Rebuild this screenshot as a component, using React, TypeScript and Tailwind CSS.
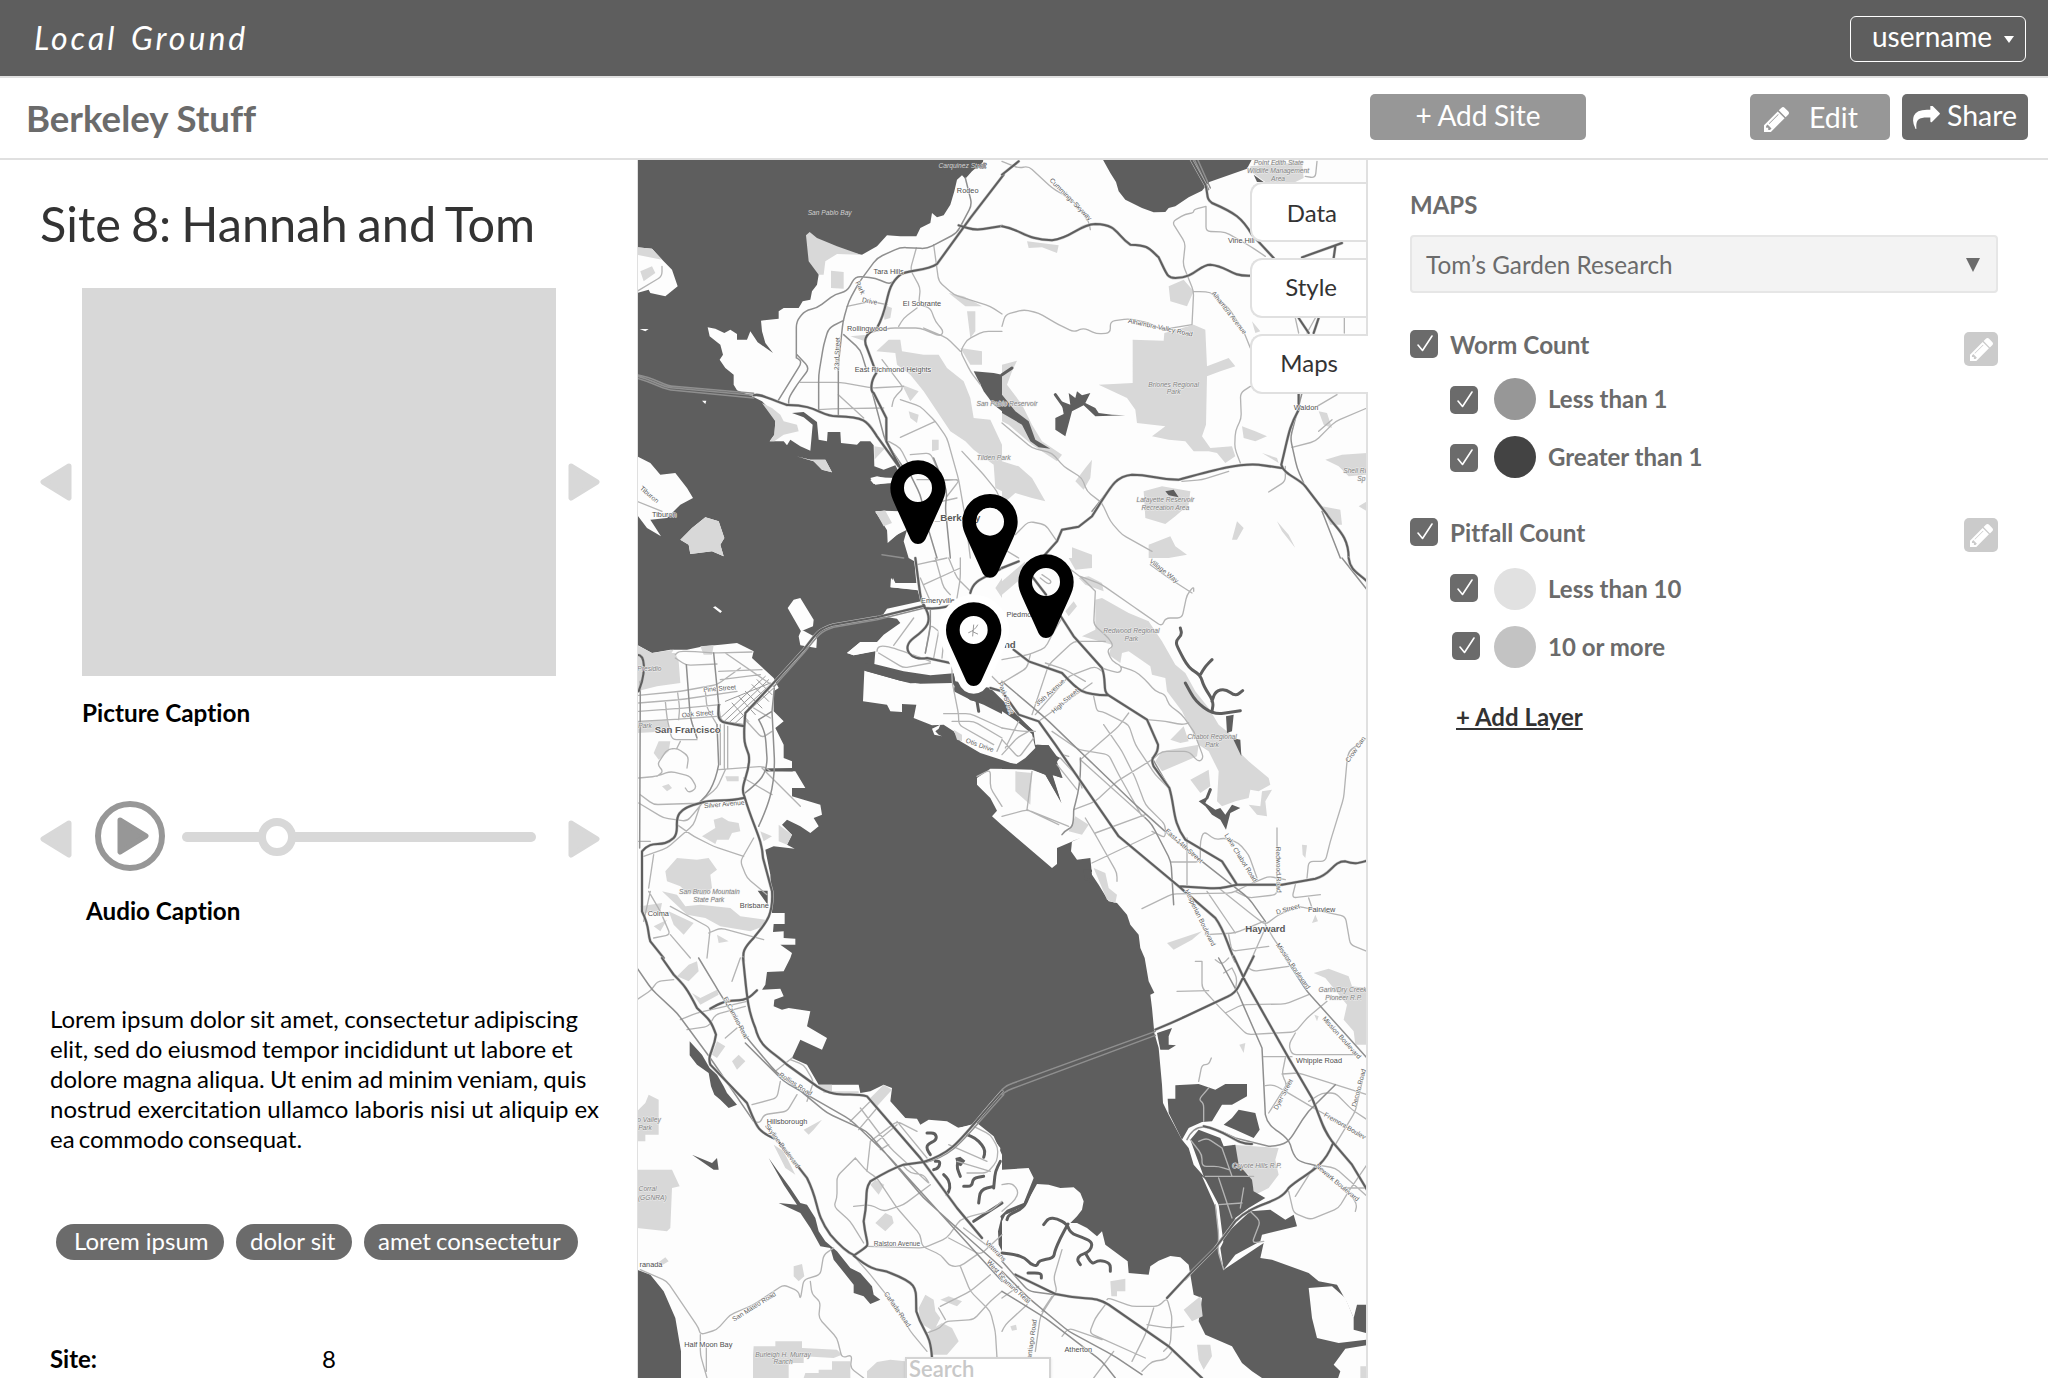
import type { ReactNode } from 'react';

type Label = [x: number, y: number, text: string, kind?: string, rotate?: number];

interface Tile {
  x: number;
  y: number;
  parks: string;
  water: string;
  creeks: string;
  land: string;
  major: string;
  mid: string;
  minor: string;
  labels: Label[];
}

/* Coastline of the bay, in map units (three units to a pixel). */
const BAY =
  'M-10 -10H1040L1038 12L1005 40L985 62L975 52L960 65L952 100L940 140L920 172L900 178L885 165L880 195L850 210L838 235L790 235L750 232L720 265L675 290L620 280L560 300L545 350L540 380L525 400L520 425L497 430L485 450L440 450L425 460L425 482L372 488L375 520L385 555L408 585L362 553L340 520L330 545L300 545L300 528L280 515L262 525L235 512L212 508L218 535L250 560L258 590L248 605L265 630L290 650L290 680L300 697L345 715L375 730L400 755L415 790L412 830L398 850L440 850L450 862L460 845L490 865L520 878L527 800L500 778L465 765L500 762L540 792L545 845L570 850L572 822L610 822L612 855L660 860L670 850L700 850L710 862L712 925L740 935L775 922L800 970L780 960L715 958L700 966L710 978L775 975L790 1060L740 1058L715 1062L750 1110L752 1155L780 1130L810 1115L800 1150L815 1200L832 1210L838 1275L775 1275L768 1260L762 1288L842 1297L852 1330L750 1352L735 1375L780 1382L790 1395L740 1430L720 1452L670 1452L630 1485L650 1492L715 1480L712 1518L800 1540L880 1552L950 1546L955 1570L1060 1590L1120 1650L1190 1720L1195 1760L1235 1762L1250 1790L1270 1800L1255 1812L1275 1860L1245 1850L1258 1890L1275 1935L1225 1850L1185 1833L1060 1832L1020 1860L1020 1880L1060 1920L1080 1958L1065 1975L1095 2002L1245 2130L1260 2118L1260 2070L1330 2040L1305 2050L1302 2080L1320 2105L1360 2100L1365 2150L1385 2180L1415 2230L1440 2235L1470 2270L1480 2300L1505 2330L1510 2370L1523 2400L1535 2470L1552 2504L1540 2510L1545 2550L1552 2625L1565 2670L1575 2780L1578 2835L1595 2870L1635 2945L1655 2970L1670 3020L1705 3060L1735 3130L1745 3230L1743 3280L1760 3335L1880 3255L1870 3300L1905 3305L2015 3345L2045 3370L2100 3380L2128 3430L2150 3480L2160 3440H2200V3560L2125 3572L2090 3620L2110 3640L2100 3670H1890L1845 3640L1815 3615L1785 3565L1705 3530L1685 3490L1695 3420L1670 3410L1660 3350L1655 3320L1630 3298L1600 3294L1565 3308L1540 3325L1535 3350L1475 3345L1472 3310L1405 3260L1395 3220L1380 3235L1350 3210L1320 3195L1300 3195L1320 3175L1335 3155L1340 3130L1330 3105L1310 3088L1270 3090L1235 3080L1200 3078L1185 3105L1165 3140L1130 3160L1105 3170L1095 3190L1090 3175L1110 3155L1160 3135L1190 3060L1175 3030L1095 3035L1095 2990L1070 2935L1020 2895L965 2910L930 2890L875 2885L850 2900L840 2882L805 2880L760 2830L765 2790L740 2780L700 2800L670 2805L665 2780L545 2780L510 2720L465 2700L490 2645L555 2675L570 2640L510 2605L520 2560L455 2550L435 2555L410 2545L412 2525L440 2515L430 2492L375 2495L385 2480L390 2442L440 2440L460 2400L465 2385L430 2360L475 2360V2342L440 2340V2320L408 2322L410 2298H443V2265H405L400 2150L385 2075L410 2065L473 2072L450 2060L465 2030L435 2000L450 1985L490 2005L520 2025L545 2005L530 1980L555 1970L550 1940L500 1925L465 1915L465 1890H505L475 1840L390 1838V1832L465 1830V1810L440 1800V1760L415 1710L440 1690L410 1660V1600L425 1590L410 1560L345 1500L350 1480L300 1455L250 1460L200 1465L150 1475L100 1475L45 1485L-10 1455Z';

const ALAMEDA =
  'M682 1538L790 1568L850 1577L945 1575L960 1592L1000 1627L1050 1638L1095 1660L1140 1690L1185 1728L1195 1770L1165 1800L1135 1820L1095 1806L1030 1785L970 1750L950 1720L920 1700L885 1702L830 1680L838 1640L795 1638L795 1662L760 1660L750 1640L678 1630Z';

const PIN = 'M0 168C-14 168-20 160-25 148L-70 48C-78 30-83 18-83 0A83 83 0 1 1 83 0C83 18 78 30 70 48L25 148C20 160 14 168 0 168Z';
const PIN_RING = PIN + 'M42 0A42 42 0 1 0-42 0A42 42 0 1 0 42 0Z';

const TILES: Tile[] = [
  {
    x: 0,
    y: 0,
    parks:
      'M507 232L518 222L540 240L600 265L672 290L600 288L565 310L560 350L545 350L515 310ZM582 338L620 342V392L582 390ZM718 580L755 545L790 545L795 580L860 590L905 590L930 630L980 670L1000 720L1010 780L1060 785L1095 860V1000L1075 990L1070 920L1010 875L985 850L940 820L900 760L860 700L820 650L780 620L775 585ZM935 405L980 415L1035 445L985 445ZM990 460L1015 460L1015 520L1000 540ZM740 440L765 450L760 480L742 485ZM640 535L690 530L680 548ZM795 680L845 700L820 730ZM815 760L845 770L840 795L820 780ZM885 845L905 845L905 875L885 880ZM375 735L405 750L430 770L440 790L480 800L485 820L440 830L412 850L398 850L412 830L415 790ZM712 865L745 870L712 905ZM970 570L1035 580L1035 620L1000 620Z',
    water: 'M1010 640L1070 645L1095 650V760L1070 740L1040 700Z',
    creeks: '',
    land: 'M0 268L45 272L80 310L105 335L122 385L85 415L40 405L35 395L0 405ZM0 895L40 915L70 950L115 945L150 990L168 1020L130 1040L90 1080L40 1085L72 1135L30 1110L0 1070ZM130 1145L165 1110L205 1078L245 1090L262 1140L250 1160L260 1195L225 1180L160 1188L155 1160ZM478 895L520 905L565 905L585 943L555 935L530 910ZM8 513L35 513L25 520ZM195 728L208 728L205 738ZM700 960L720 955L790 970L715 980ZM715 1060L745 1058L765 1095L800 1090L800 1115L755 1150L752 1120Z',
    major: 'M350 712C370 705 400 725 450 741C540 740 550 775 600 775C690 778 690 790 720 835L785 925M1100 50L1000 180L900 318C870 340 810 335 790 350C740 390 760 440 720 510C680 530 680 550 690 570L718 645C700 670 700 700 710 705L748 780V850L790 930M965 202L1015 217L1095 204',
    mid: 'M0 655C60 670 80 690 110 690L350 712M0 650C60 660 80 685 110 685L350 706M0 661C60 678 80 695 110 697L350 720M478 600V490L505 457L540 450L595 408L630 400L655 355L715 360L755 378L770 370M800 930L745 850L705 700M480 600L495 612L422 730M480 590L518 630L480 680L455 720V740M545 755V650L560 560L575 510L620 487M604 775V620L618 490L635 430L665 375L720 300L790 268L870 272L960 225L1005 140L985 60M620 530L670 575L690 640M735 1190L800 1200M820 950L850 1010L870 1100L900 1200M890 900L930 1000L925 1050L940 1200',
    minor:
      'M490 673H610L705 690L800 685M545 755L600 752L740 750M604 710L680 780M735 605L800 690L770 720L765 745M790 725L850 745L895 790L930 840L965 965L985 1080L1000 1200M790 838L895 790M755 850L790 870L820 930M820 890L880 885L900 930M890 260L905 370L950 410L1060 445L1095 468M838 270L820 335L850 390L845 440L880 450L895 490L920 520L910 535L850 510L760 510L690 525M840 450L800 480L785 505M1095 520L1040 520L990 545L970 580L1000 640L1030 680M970 580L930 540L860 510M975 880L1040 950L1080 1000L1095 1040M630 445L700 430L750 440M840 965H960L965 970L930 1015M870 1040L960 1020M0 400L75 355V325M0 1030L75 1060M890 970L960 965',
    labels: [
      [976, 29, 'Carquinez Strait', 'wi'],
      [992, 105, 'Rodeo', 't'],
      [578, 171, 'San Pablo Bay', 'wi'],
      [755, 347, 'Tara Hills', 't'],
      [855, 445, 'El Sobrante', 't'],
      [690, 519, 'Rollingwood', 't'],
      [768, 642, 'East Richmond Heights', 't'],
      [602, 592, '23rd Street', 'r', -88],
      [668, 395, 'Park', 'r', 65],
      [698, 436, 'Drive', 'r', 10],
      [1070, 907, 'Tilden Park', 'p'],
      [82, 1077, 'Tiburon', 't'],
      [962, 1090, '_Berkeley', 'c'],
      [36, 1016, 'Tiburon', 'r', 40],
    ],
  },
  {
    x: 1095,
    y: 0,
    parks:
      'M745 25L900 12L905 60L880 72L790 72L745 40ZM500 385L545 365L575 400L555 445L505 430ZM392 545L485 548L487 525L575 500L610 515L615 625L680 600L700 625L655 640L615 655L612 800L600 835L625 870L690 865L700 895L670 915L645 885L620 880L575 880L550 850L500 845L450 835L490 805L405 795L400 755L375 720L290 680L392 675ZM0 620L45 608L30 640L15 680L60 740L90 800L120 850L180 890L165 910L90 860L20 800L0 790ZM0 910L50 925L90 960L130 1030L90 1020L40 1005L0 1040ZM425 1000L480 985L565 1000L560 1040L520 1075L490 1098L430 1080ZM440 1160L505 1135L520 1165L555 1190L500 1200H440ZM210 1168L270 1190V1200H210ZM220 970L250 930L270 905L265 960L245 995ZM720 805L760 820L795 835L760 850L725 840ZM950 760L975 765L990 810L965 800ZM970 905L1020 890L1095 885V950L1040 955L1010 925ZM960 1045L1015 1055L1020 1100L985 1100ZM1070 1045L1095 1030V1060ZM825 1090L860 1130L880 1170L840 1120ZM705 1090L725 1110L705 1145L690 1145ZM75 250L170 262L165 285L120 268L80 270ZM750 490L775 520L760 525ZM780 885L825 900L830 915Z',
    water:
      'M300 0H752L735 32L622 72L600 98L560 118L520 145L500 150L490 162L455 163L420 150L370 125L350 100L342 72L325 45ZM0 710L40 760L80 790L100 845L145 872L110 868L85 850L60 800L0 765ZM160 780L185 768L178 730L205 740L200 705L220 720L225 700L240 712L265 705L250 735L280 750L290 765L330 770L370 772L280 775L245 742L210 760L190 835L160 815ZM490 1000L515 995L530 1018L500 1012ZM755 50L785 72H765Z',
    creeks: 'M160 710L185 745M0 650L30 630',
    land: 'M400 5L390 40L440 35L480 40L560 35V0H405Z',
    major:
      'M0 50L50 10M0 205C60 215 70 245 150 247C210 240 230 200 280 198C350 200 340 230 385 260C440 262 440 270 470 298C495 350 495 360 520 360C580 360 590 320 625 320C680 325 680 355 745 353M565 0L610 80C620 110 610 120 630 135C700 165 720 180 750 230L815 300M900 298L1020 255M1000 265L995 300M890 705V755C860 810 860 830 838 920C845 950 890 960 910 985L975 1070C1000 1110 1040 1130 1040 1200M838 930L770 920C710 915 640 935 530 965C460 965 450 950 390 950C340 955 330 980 270 1075L230 1106L180 1115L165 1150L120 1200M890 480L920 525M950 480L935 525',
    mid: 'M575 0L620 95M585 0L625 90M270 1060L345 965M900 705L865 840L885 930L905 975M960 1060L1015 1200',
    minor:
      'M0 10L50 30L80 25L150 90L210 125L260 190L265 215M612 145L575 155V165L550 168L510 192L550 255L543 320L575 400L570 500M612 145V220L670 222L745 265L790 295M575 400L625 402L680 450L725 520L745 570M0 505L10 470L65 455L110 465L170 500L215 522L245 510L285 528L325 525V490L380 482L440 495L480 515L570 500M745 685L715 705L718 780L700 820L698 870L715 915M0 795L90 870L150 885L185 925L240 960L255 1000L300 1035L325 1090L360 1130L450 1180M945 745L1005 710M1095 750L1000 790L940 850L870 868M800 1002L850 970V925M540 970L600 965L680 940M945 10L940 60L910 55M0 1170L50 1200M40 1130L80 1090L130 1100L165 1150M950 820L990 785M1027 480V525M880 480L890 525M940 480L915 525',
    labels: [
      [830, 20, 'Point Edith State', 'p'],
      [828, 46, 'Wildlife Management', 'p'],
      [828, 70, 'Area', 'p'],
      [205, 130, 'Cummings Skyway', 'r', 45],
      [718, 255, 'Vine Hill', 't'],
      [475, 515, 'Alhambra Valley Road', 'r', 12],
      [680, 470, 'Alhambra Avenue', 'r', 52],
      [515, 686, 'Briones Regional', 'p'],
      [515, 709, 'Park', 'p'],
      [15, 745, 'San Pablo Reservoir', 'p'],
      [912, 756, 'Waldon', 't'],
      [490, 1033, 'Lafayette Reservoir', 'p'],
      [490, 1057, 'Recreation Area', 'p'],
      [1058, 945, 'Shell Ri', 'p'],
      [1078, 968, 'Sp', 'p'],
    ],
  },
  {
    x: 0,
    y: 1200,
    parks:
      'M0 290L50 285L115 285L125 310L130 375L60 385L0 400ZM0 490L90 485L100 520L0 525ZM190 265L230 262L225 290L200 290ZM50 585L65 550L100 550L95 580L65 605ZM195 835L235 810L230 785L255 778L275 790L305 795L310 820L285 825L275 845L240 845L235 858ZM85 940L120 900L180 905L215 900L240 935L220 950L225 990L205 1010L150 1005L130 985L90 970ZM75 1000L120 1010L145 1045L190 1040L280 1050L310 1075L385 1085L380 1105L340 1120L250 1105L205 1080L150 1070ZM10 1045L75 1035L70 1060L20 1065ZM95 1060L170 1095L140 1130L110 1100ZM265 655L305 655V670L270 670ZM75 685L95 678L105 690L90 700ZM240 1130L275 1150L245 1155ZM50 1105L90 1085L70 1120ZM425 800L465 830L450 860L425 850ZM370 820L405 835L380 850ZM1075 90L1095 60V120ZM950 515L975 530V550L960 545ZM0 262L45 285L110 275L100 290L0 295Z',
    water: 'M685 315L780 345L820 360L950 348L955 372L820 376L790 368L685 338ZM362 998H392L392 1040ZM955 372L1000 400L1095 450V468L1040 440L1000 425L950 400Z',
    creeks: 'M1020 430L1025 460M390 636H465',
    land: 'M452 150L470 125L490 120L530 185L528 205L492 220ZM492 218L500 218L540 240L538 270L490 262L485 235ZM228 148L235 145L255 160L250 165ZM630 285L670 252L720 255L730 275L650 292ZM885 512L910 500L905 512L895 520L905 530L915 535L892 530ZM762 60L775 75L840 80L840 95L760 88Z',
    major:
      'M835 0C850 110 850 130 862 143L720 178L590 200C540 215 540 225 500 275L405 380L325 465L322 505C320 560 325 560 335 590C345 640 305 680 322 715C350 810 375 840 378 900L405 1000C410 1080 380 1100 350 1140C310 1180 320 1190 320 1210M0 290C30 290 20 350 15 370L5 400M245 440L243 490L322 505M320 720C260 735 230 720 190 735C80 760 140 810 110 840C70 875 50 840 15 880V1060C40 1110 30 1120 40 1150L80 1200M862 145C890 190 870 210 830 240C790 270 820 310 870 300L940 315M862 150C900 155 930 150 970 130M1095 400L1060 390M1000 105C1010 60 1050 60 1095 30',
    mid: 'M862 150L720 185L590 208C550 220 540 235 505 280L412 385M405 460L365 485C390 530 385 540 390 600C390 650 370 670 320 708M412 390L405 460L412 600C415 700 385 760 365 805M148 320L160 480L180 540M230 285L250 490L322 500M880 150L880 210L865 285M240 500L245 620C230 700 200 720 190 730M10 370L8 870',
    minor:
      'M115 290L125 280H160L230 285L345 282M115 300L148 322L240 318M5 412L130 400L240 380L310 330M5 435L130 425L300 400M5 460L140 450L250 440M5 490L100 485L240 475M85 430L90 480L105 545H180M122 405L128 450L125 485M205 400L210 450L240 500M250 500V620M262 500V630M272 505V630M245 340L375 335M250 365L370 350M265 285L410 385M245 635L380 625L400 640M185 735L240 690L265 635M5 660L60 655L100 640L160 655L180 690L155 705L145 690M60 655L80 640L60 620L90 575L120 570L155 595L150 630M120 570L130 550M10 710L50 740L210 735M5 735L80 780L150 790L180 755L200 730M5 850L40 850M20 895L90 870L170 800L190 740M120 800L170 835L230 865L320 895M350 840L310 910L330 960L390 1010M35 990L50 890M35 1000L70 1060L100 1130L50 1140M40 1000L20 1090M100 1045L220 1110L210 1200M215 1125L250 1110L380 1145M100 1130L160 1200M320 660L405 710M375 630L490 745M320 480L375 540L405 520M350 450L400 480M770 262L830 180M865 285L880 200L905 220M905 220L890 300M922 230L915 300M720 280C720 250 760 265 880 310M725 285L800 330L880 315M850 60L880 130M840 20L930 0M860 80L970 30M895 0L920 90L940 110M935 0L960 60L1000 100M970 0V60L960 120M945 320V370L965 470V500L1070 560M920 467H1000L1095 510M945 490H1010L1095 540M1060 350L1095 385M1020 655L1060 635V690L1095 745M1080 580L1095 545',
    labels: [
      [37, 338, 'Presidio', 'p'],
      [248, 398, 'Pine Street', 'r', -5],
      [182, 474, 'Oak Street', 'r', -5],
      [152, 524, 'San Francisco', 'c'],
      [24, 510, 'Park', 'p'],
      [262, 745, 'Silver Avenue', 'r', -5],
      [217, 1008, 'San Bruno Mountain', 'p'],
      [215, 1033, 'State Park', 'p'],
      [352, 1050, 'Brisbane', 't'],
      [64, 1073, 'Colma', 't'],
      [903, 136, 'Emeryville', 't'],
      [1028, 568, 'Otis Drive', 'r', 20],
    ],
  },
  {
    x: 1095,
    y: 1200,
    parks:
      'M280 125L300 120L380 165L440 190L480 250L520 320L550 345L580 400L620 450L650 500L700 540L720 590L740 610L800 660L805 680L770 700L745 695L740 720L700 730L660 745L645 730L650 640L620 580L590 560L540 460L495 400L490 360L450 350L445 325L380 280L360 285L355 315L320 290L330 260L240 235L280 215ZM565 665L620 635L625 685L595 705ZM460 610L480 580L590 560L585 595L480 640ZM505 545L545 505L560 550L535 555ZM740 740L775 745L780 700L810 695L790 730L795 775L765 770ZM230 60L260 55L300 75L305 100L250 80ZM200 0H270V30L220 35ZM200 820L220 775L260 800L240 830ZM275 930L310 945L320 990L345 1010L340 1035L315 1025ZM495 1155L600 1120L570 1145L515 1175ZM40 640L90 645L85 740L40 700ZM900 860L915 862L910 900L902 890ZM930 1095L940 1070L948 1090ZM190 160L215 130L225 145L200 175ZM0 70L70 10L60 60L0 110Z',
    water: 'M0 612L45 618L98 600L105 560L140 562L170 602L165 612L182 660L152 652L178 735L130 650L90 635L0 633ZM672 475L695 470L690 520L675 525ZM692 540L715 545L718 595ZM590 730L620 715L610 735L640 755L655 750L670 770L690 740L715 750L685 765L672 815L655 785L630 770L610 745ZM245 935H270V942H255L255 960L270 962L280 985L260 970L248 965Z',
    creeks: 'M535 210L540 230L520 250L530 275L560 330L595 350L605 385L635 430L630 460M595 350L610 325L630 305M630 430L640 400L670 392L700 415L722 398M550 375L580 430L635 470L715 458M625 695L615 720M0 445L40 480L90 520',
    land: 'M150 640L200 690L230 690L240 790L175 730Z',
    major:
      'M0 30L50 10M170 165L215 235L300 330C315 370 300 400 320 412L435 485L468 560C470 600 440 590 455 625L502 690C520 750 510 790 550 845L660 910L705 980H840L940 962C990 950 990 910 1030 910C1060 920 1070 915 1095 908M35 275L80 310L180 345C230 400 240 410 320 412M0 400L50 470L110 490L160 560L350 835L530 985L640 1080C670 1120 675 1160 700 1210M1040 0C1045 40 1070 45 1095 70M530 985L650 992L705 980M90 55L132 110',
    mid: 'M235 600C240 700 215 740 215 760C215 830 200 800 180 830M0 370L130 480L400 740L500 830L600 910L740 1020L790 1090M450 600L505 695M515 1040L507 910L450 800L430 780M1020 0L1095 95',
    minor:
      'M0 305L80 290L130 270L150 230L180 180M0 375L75 330L85 290M90 470L140 320L215 250H310M130 315L190 335L250 370M110 490L270 375M100 470L200 355L280 325L300 340M235 55L300 80L400 150L480 205L490 180H540L555 110L575 85V100M445 20L500 60L570 105M280 100L275 200L320 240L335 265L315 275L330 310L360 325L355 345L330 340L300 330M355 325L400 340L430 365L460 400L490 410L500 440L540 470L575 520M435 485L490 490L540 500L560 495M575 520L605 600L590 612L560 580L480 580L450 605M275 415L285 460H300L380 500L400 560L460 650L505 695M305 500L360 580L400 660L430 740L490 800L490 840L450 820M235 605L350 505L380 465M235 605L430 780M150 520L230 575L320 590L350 650L420 775M215 755L280 730L345 670L450 605M280 825L430 770M270 915L460 825M250 780L280 830L345 945V970M0 775L75 755L200 805M75 755L90 640M75 755L170 800M0 510L60 520L100 520M0 545L50 600L95 540M0 590L45 540L80 520M50 490L10 570M165 620L225 695M175 600L230 660L240 690M180 590L200 595M505 912H595V850L605 820L640 845L670 840L710 855L740 890L765 960M555 840V980M825 810V1010L740 1020L700 1000M420 1052L510 1008L690 1005L740 980L800 955L850 965M650 990L750 1070L790 1100L830 1070L890 1045L960 1060L1030 1075L1045 1160L1095 1180M615 1000L700 1125M610 1130L700 1125L785 1090M880 980L870 1020L955 1010M920 1020L930 1050M1095 540L1040 580L1035 610L1025 720L985 850L970 910H920L915 960M790 1100L820 1150L860 1200M790 1110L750 1200M680 1130L690 1180L800 1165M280 100L240 60L200 30M120 50L150 70L140 80L115 60',
    labels: [
      [485, 45, 'Village Way', 'r', 38],
      [60, 176, 'Piedmont', 't'],
      [-16, 270, 'Oakland', 'c'],
      [388, 225, 'Redwood Regional', 'p'],
      [388, 248, 'Park', 'p'],
      [145, 410, '35th Avenue', 'r', -42],
      [190, 435, 'High Street', 'r', -42],
      [630, 544, 'Chabot Regional', 'p'],
      [630, 568, 'Park', 'p'],
      [1062, 580, 'Crow Can', 'r', -55],
      [545, 870, 'East 14th Street', 'r', 42],
      [715, 905, 'Lake Chabot Road', 'r', 58],
      [828, 940, 'Redwood Road', 'r', 89],
      [593, 1085, 'Hesperian Boulevard', 'r', 64],
      [858, 1060, 'D Street', 'r', -15],
      [959, 1063, 'Fairview', 't'],
      [790, 1123, 'Hayward', 'c'],
      [10, 425, 'Park Street', 'r', 70],
    ],
  },
  {
    x: 0,
    y: 2400,
    parks:
      'M120 55L155 20L180 10L185 40L155 70ZM165 105L190 120L240 95L245 110L190 140ZM225 290L240 250L265 265L240 300ZM285 310L305 290L325 310L300 335ZM0 460L25 435L35 410L65 425V530H25V550H0ZM0 635H105L128 685L105 690L100 810L90 820L0 810ZM470 925L495 918L502 955L485 970L470 955ZM62 915L85 898L95 910L75 922ZM700 680L715 665L742 680L725 710ZM715 795L745 765L765 775L770 795L745 820ZM845 1050L865 1010L890 1025L895 1060L910 1080L890 1120L850 1095ZM875 1120L915 1095L945 1110L965 1150L930 1190H880ZM350 1165H415V1150H495V1170L600 1175L615 1190L590 1200L500 1195V1215H455V1260H348V1190ZM505 1245H545V1235H585V1210H640V1260H500ZM690 1240L720 1212L760 1205L805 1210V1260H690ZM500 515L555 485L530 515L515 530ZM910 1025L935 1015L975 1030L960 1045ZM410 560L440 580L475 650L445 630ZM545 380H585V400H665V405H560ZM700 420L740 380L765 395L720 445Z',
    water: 'M0 935L40 950L80 1000L115 1080L132 1180V1260H0ZM158 250L195 290L218 330L240 350L260 385L270 405L300 440L275 450L250 425L232 410L222 385L215 345L180 320L158 292ZM395 600L420 635L460 690L490 735L510 740L535 780L545 820L565 850L600 880L640 930L670 945L705 985L710 1010L730 1025L700 1038L680 1015L650 1005L650 980L610 930L590 905L580 870L550 865L520 810L490 765L425 735L480 740L440 680ZM165 590L225 615L240 600L245 635L230 635ZM1095 770L1083 820L1085 860L1095 880ZM955 600L970 596L985 608L972 625L960 620Z',
    creeks: 'M870 525H895L900 545L870 560V575L880 590M895 610H910L905 630L890 635M920 650L935 665L940 690L930 710M990 530L1015 540L1035 560L1045 580L1040 598M962 615L960 630L970 655M980 685H1005L1008 660L1040 655M1025 735L1030 695L1070 685M1090 610L1075 640L1072 670L1070 690M1010 790L1095 735',
    land: 'M875 500L900 510H960L1010 500L1060 530L1090 570L1085 630L1060 690L1080 720L1040 780L1000 790L960 720L880 600Z',
    major:
      'M75 0L110 50C140 80 150 90 180 150C210 180 220 180 237 230C230 280 210 290 220 320L330 435C360 510 360 520 420 545L510 660C550 740 530 760 580 830C640 900 660 890 650 893C720 950 730 930 760 945C850 980 835 990 838 1060C860 1130 880 1120 885 1200M318 0C330 110 330 150 355 210C370 270 400 275 450 320L540 385C600 425 640 400 690 415L850 600L960 750L1035 840M650 893C710 850 690 880 680 790C695 720 680 700 700 670C750 640 770 630 800 620L860 612C960 580 970 540 1095 400M220 152L260 130L330 125L360 97',
    mid: 'M860 615C960 590 980 540 1100 410M185 0L245 100L330 240L415 340L480 390L570 465L690 520L860 720L960 810L1095 930M325 255L440 370L640 485L750 590L1095 970M0 30L45 95L120 165L220 300L350 490',
    minor:
      'M0 125L45 95L60 70L110 65M130 185L180 165L330 130M150 215L215 205L235 170L325 145M265 240L300 210M285 70L310 0M345 440L420 420L430 370M480 410L450 460L380 470L370 495L350 490M655 600L690 640L720 660L780 750L850 830L855 865L910 890L940 925H970L1020 890M690 640L700 550M655 600L600 655V720L590 745L640 790L680 855M650 745L700 740L740 760L800 740L880 680M700 550L780 490L840 520M640 490L700 430M665 515L720 450M715 555L780 500M730 575L755 560M670 450L760 570L880 680L860 650L820 645L800 625M780 490L870 600M690 865L860 870L930 840L970 785L1000 775L1060 760L1095 730M10 935L90 970L185 1110L190 1130L240 1115L280 1070L350 1040L440 980L485 1000L490 1025L500 965L550 950L560 890L590 870M190 1130L190 1190L210 1260M208 1170V1240M520 970L525 1010L550 1030L545 1080L600 1140L615 1200L645 1190L640 1230L680 1260M660 905L700 950L780 1050L820 1120L870 1180M870 1125L910 1110L925 1090L1010 1085L1060 1030L1095 1000M970 925L1000 1000L1060 1060L1075 1120L1080 1200M910 1045L1000 1000L1060 950M905 1050L925 1085M460 305L500 320L530 370L510 430M415 340L465 300M935 560L1050 610M960 610L1060 640M935 840L1030 890L1095 830M980 810L1060 870M1010 505L1060 530L1083 570L1080 610L1050 645H990',
    labels: [
      [295, 185, 'El Camino Real', 'r', 62],
      [475, 385, 'Rollins Road', 'r', 32],
      [450, 497, 'Hillsborough', 't'],
      [435, 570, 'Skyline Boulevard', 'r', 53],
      [36, 492, 'o Valley', 'p'],
      [24, 516, 'Park', 'p'],
      [32, 700, 'Corral', 'p'],
      [46, 725, '(GGNRA)', 'p'],
      [780, 864, 'Ralston Avenue', 'r', 0],
      [42, 928, 'ranada', 't'],
      [352, 1052, 'San Mateo Road', 'r', -32],
      [780, 1060, 'Cañada Road', 'r', 55],
      [214, 1166, 'Half Moon Bay', 't'],
      [438, 1196, 'Burleigh H. Murray', 'p'],
      [438, 1219, 'Ranch', 'p'],
      [1075, 885, 'Veterans', 'r', 45],
      [1075, 940, 'West El', 'r', 48],
    ],
  },
  {
    x: 1095,
    y: 2400,
    parks:
      'M935 45L980 32L1040 55L1050 85L1095 90V260L1060 260L1055 220L1025 185L1035 140L990 85L970 60ZM690 560L830 570L820 605L830 650L800 690L760 710L740 650L700 620ZM545 1055L595 1015L602 1075L570 1090ZM585 1160H625L630 1195L605 1235L590 1205ZM325 970L370 962V1000H345V1015H328ZM25 1105L42 1100L45 1115L30 1118ZM937 170L950 175L945 190ZM712 260L730 255L725 285ZM1075 1225H1095V1260H1075Z',
    water: 'M465 225L510 210L500 235V260L522 262L500 275H475ZM520 382L590 378L640 395L670 378H735V415L690 440H660L630 490L600 492L560 510L540 545L500 465L497 422H520ZM665 500L690 480L710 455L760 465L773 515L755 540L700 515ZM565 545L590 515L655 540L665 565L700 560L710 620L750 665L755 700L790 720L740 750L700 780L665 860L650 740L605 655ZM745 760L805 755L850 785L875 770L885 805L780 830L775 850L700 890L665 935L655 870L680 820Z',
    creeks: 'M0 885L40 890L70 900L85 918L105 925L110 908L155 900L158 880L175 840L198 798M125 800L140 780L165 782L195 798L205 825L240 838L268 850L270 868L255 885L235 890L225 905L235 920M250 885L270 920L290 905L325 915V940M15 785L20 770L65 750L80 715L102 665M78 945H118V960',
    land: 'M920 990L990 985L1030 1020L1055 1080L1055 1115L1092 1125V1145L1010 1155L945 1140L930 1080ZM600 655L640 690L658 735L640 745ZM670 470L700 445L690 490L670 515Z',
    major:
      'M695 -5L730 70L860 300L930 420C960 490 960 510 990 550L1050 620L1095 695M755 -5L700 105L530 185L460 215M992 558C960 640 900 650 860 690C830 740 760 730 700 790L640 870L560 950L495 1020M40 950L160 1008C260 1030 270 1010 320 1040L500 1165L600 1260M605 505C680 520 700 560 750 558',
    mid: 'M460 220L15 382L0 395M460 232L15 398L0 410M850 0L915 100L1095 300M700 785L630 880L550 965M555 545C580 490 620 500 700 540L800 565C880 560 860 535 920 460L1000 380M0 910L80 1000L160 1010M0 940L80 1020L200 1120L330 1190L420 1250M650 0L710 110L780 270L790 470C800 520 850 520 865 560C880 620 900 610 950 625M0 1000L130 1080L300 1210L340 1260',
    minor:
      'M600 10V90L650 145L735 230L880 222L915 180L975 130M600 10H580M525 100L620 98M670 165L720 140L850 138L920 110M740 30L755 40L860 25M880 225L860 260L870 290H1060M785 296H870M850 300L840 350L855 380L835 420M790 383L815 380L850 400L935 450L1095 540M840 348L890 345L1095 410M800 465L860 370M920 430L960 405L1000 405L1050 455L1095 485M1000 560L1060 460L1085 350M880 715L940 620L1000 630L1095 715M860 700L875 765L925 785L1010 750L1040 700L1095 620M1060 760L1065 740L1050 715M1030 690L1095 690M180 875L155 960L165 1000L150 1020L115 1075L100 1180M150 1015L120 1060M315 1025L320 1020L390 1045L470 1045L495 1020L510 1075L505 1160L485 1180M310 1040L280 1080L262 1125L430 1200M455 1050L430 1130L390 1210M435 1100L500 1110L545 1105M335 1180L275 1260M180 1135L200 1110L300 1145M420 1240L450 1210L490 1205L515 1175L500 1165M75 1040L10 1100L0 1120M50 985L0 1020M0 680L30 675L50 700L40 725L0 760M590 370L600 320H620L628 300M605 490V435L590 425L620 390M660 570L690 655M610 655H755M590 550L615 540L660 570M650 660L690 780M725 690L715 750M650 740L720 735M565 545L600 590V625H650L680 635M640 740L650 830L648 880L665 935M740 755L775 790L750 855L785 850M690 30L665 45M640 5L660 20L680 0M700 100L705 60L690 30',
    labels: [
      [872, 30, 'Mission Boulevard', 'r', 55],
      [1022, 103, 'Garin/Dry Creek', 'p'],
      [1025, 127, 'Pioneer R.P.', 'p'],
      [1018, 245, 'Mission Boulevard', 'r', 48],
      [951, 315, 'Whipple Road', 't'],
      [845, 415, 'Dyer Street', 'r', -62],
      [1072, 395, 'Decoto Road', 'r', -75],
      [1028, 510, 'Fremont Boulev', 'r', 30],
      [765, 629, 'Coyote Hills R.P.', 'p'],
      [1005, 680, 'Newark Boulevard', 'r', 40],
      [38, 1000, 'Camino Real', 'r', 42],
      [90, 1155, 'Santiago Road', 'r', -82],
      [229, 1181, 'Atherton', 't'],
    ],
  },
];

/* Rounds the corners of a polyline path; curves are passed through. */
function rounded(d: string, radius: number): string {
  return d
    .split('M')
    .filter(Boolean)
    .map((part) => {
      if (part.includes('C')) return `M${part}`;
      const pts: [number, number][] = [];
      for (const m of `L${part}`.matchAll(/([LHV])\s*(-?[\d.]+)(?:\s+(-?[\d.]+))?/g)) {
        const last = pts[pts.length - 1];
        if (m[1] === 'H') pts.push([Number(m[2]), last[1]]);
        else if (m[1] === 'V') pts.push([last[0], Number(m[2])]);
        else pts.push([Number(m[2]), Number(m[3])]);
      }
      let out = `M${pts[0][0]} ${pts[0][1]}`;
      for (let i = 1; i < pts.length - 1; i++) {
        const [px, py] = pts[i - 1];
        const [cx, cy] = pts[i];
        const [nx, ny] = pts[i + 1];
        const before = Math.hypot(cx - px, cy - py) || 1;
        const after = Math.hypot(nx - cx, ny - cy) || 1;
        const a = Math.min(radius, before / 2) / before;
        const b = Math.min(radius, after / 2) / after;
        out += `L${cx + (px - cx) * a} ${cy + (py - cy) * a}Q${cx} ${cy} ${cx + (nx - cx) * b} ${cy + (ny - cy) * b}`;
      }
      const end = pts[pts.length - 1];
      return `${out}L${end[0]} ${end[1]}`;
    })
    .join('');
}

const LABEL_CLASS: Record<string, string> = {
  t: 'fill-[#4c4c4c] text-[22px] font-normal stroke-white',
  c: 'fill-[#5a5a5a] text-[29px] font-bold stroke-white',
  p: 'fill-[#808080] text-[20px] italic stroke-[#eeeeee]',
  r: 'fill-[#5c5c5c] text-[20px] stroke-white',
  wi: 'fill-[#d2d2d2] text-[20px] italic stroke-[#5e5e5e]',
};

const SITES = [
  { x: 843, y: 990, halo: false },
  { x: 1059, y: 1091, halo: false },
  { x: 1227, y: 1272, halo: false },
  { x: 1010, y: 1416, halo: true },
];

function BayMap() {
  return (
    <svg viewBox="0 6 2193 3654" className="block h-[1218px] w-[731px] bg-[#fdfdfd]" fill="none" strokeLinejoin="round" strokeLinecap="round">
      <path d={BAY} fill="#5e5e5e" />
      <path d={ALAMEDA} fill="#fdfdfd" />
      {TILES.map((t) => (
        <g key={`${t.x}-${t.y}`} transform={`translate(${t.x} ${t.y})`}>
          <path d={t.land} fill="#fdfdfd" />
          <path d={t.parks} fill="#d8d8d8" />
          <path d={t.water} fill="#5e5e5e" />
          <path d={rounded(t.creeks, 30)} stroke="#5e5e5e" strokeWidth="9" />
        </g>
      ))}
      <path d="M130 1145L165 1110L205 1078L245 1090L262 1140L250 1160L260 1195L225 1180L160 1188L155 1160ZM490 898L520 905L565 905L585 943L555 935L530 910ZM715 1060L745 1058L765 1095L740 1105Z" fill="#d8d8d8" />
      <path d="M10 340L45 325L55 345L20 370ZM0 268L45 272L75 305L0 290Z" fill="#d8d8d8" />
      <path d="M265 1630L400 1575M250 1680L385 1555M262 1690L395 1565M275 1695L405 1575M290 1700L410 1590M285 1635L335 1690M305 1615L355 1670M325 1600L375 1650M345 1580L395 1630M360 1565L405 1610" stroke="#9a9a9a" strokeWidth="3" />
      {TILES.map((t) => (
        <g key={`${t.x}-${t.y}`} transform={`translate(${t.x} ${t.y})`}>
          <path d={rounded(t.minor, 14)} stroke="#b4b4b4" strokeWidth="4" />
          <path d={rounded(t.mid, 18)} stroke="#8f8f8f" strokeWidth="4.500" />
          <path d={rounded(t.major, 24)} stroke="#c4c4c4" strokeWidth="9" />
          <path d={rounded(t.major, 24)} stroke="#5e5e5e" strokeWidth="6" />
        </g>
      ))}
      {TILES.map((t) => (
        <g key={`${t.x}-${t.y}`} transform={`translate(${t.x} ${t.y})`}>
          {t.labels.map(([x, y, text, kind = 't', rotate = 0]) => (
            <text
              key={`${text}-${y}`}
              x={x}
              y={y}
              textAnchor="middle"
              transform={`rotate(${rotate} ${x} ${y - 5})`}
              className={`font-['Liberation_Sans',sans-serif] [paint-order:stroke] ${LABEL_CLASS[kind]}`}
              strokeWidth="3"
            >
              {text}
            </text>
          ))}
        </g>
      ))}
      {SITES.map((s) => (
        <g key={`${s.x}`} transform={`translate(${s.x} ${s.y})`}>
          {s.halo && <path d={PIN} fill="#fff" stroke="#fff" strokeWidth="46" />}
          {s.halo && <path d="M-15 8Q5 0 12-15M0-15L-3 18M-3 5L12 12" stroke="#999" strokeWidth="3" />}
          <path d={PIN_RING} fill="#000" fillRule="evenodd" />
        </g>
      ))}
    </svg>
  );
}

function Pencil({ className }: { className: string }) {
  return (
    <svg viewBox="128 149 1515 1515" fill="currentColor" className={className}>
      <path d="M491 1536l91-91-235-235-91 91v107h128v128h107zm523-928q0-22-22-22-10 0-17 7l-542 542q-7 7-7 17 0 22 22 22 10 0 17-7l542-542q7-7 7-17zm-54-192l416 416-832 832h-416v-416zm683 96q0 53-37 90l-166 166-416-416 166-165q36-38 90-38 53 0 91 38l235 234q37 39 37 91z" />
    </svg>
  );
}

function ShareArrow() {
  return (
    <svg viewBox="0 128 1792 1536" fill="currentColor" className="h-[23px] w-[27px]">
      <path d="M1792 640q0 26-19 45l-512 512q-19 19-45 19t-45-19-19-45v-256h-224q-98 0-175.500 6t-154 21.500-133 42.500-105.500 69.500-80 101-48.500 138.500-17.500 181q0 55 5 123 0 6 2.500 23.500t2.500 26.500q0 15-8.500 25t-23.500 10q-16 0-28-17-7-9-13-22t-13.500-30-10.500-24q-127-285-127-451 0-199 53-333 162-403 875-403h224v-256q0-26 19-45t45-19 45 19l512 512q19 19 19 45z" />
    </svg>
  );
}

function Triangle({ flip = false, className = 'text-[#d8d8d8]' }: { flip?: boolean; className?: string }) {
  return (
    <svg viewBox="0 0 32 38" className={`h-[38px] w-8 shrink-0 ${flip ? '-scale-x-100' : ''} ${className}`}>
      <path d="M3 3L29 19L3 35Z" fill="currentColor" stroke="currentColor" strokeWidth="5" strokeLinejoin="round" />
    </svg>
  );
}

function Check({ className = '' }: { className?: string }) {
  return (
    <span className={`flex size-7 shrink-0 items-center justify-center rounded-[5px] bg-[#6b6b6b] ${className}`}>
      <svg viewBox="0 0 28 28" className="size-7" fill="none" stroke="#fff" strokeWidth="1.6" strokeLinecap="round" strokeLinejoin="round">
        <path d="M8 15L12.500 20.500L22 6" />
      </svg>
    </span>
  );
}

function GroupHead({ children }: { children: ReactNode }) {
  return (
    <div className="flex h-9 grow items-start">
      <Check />
      <span className="ml-3 text-[24.3px] leading-[30px]">{children}</span>
    </div>
  );
}

function EditBox({ className = '' }: { className?: string }) {
  return (
    <span className={`flex size-[34px] shrink-0 items-center justify-center rounded-[5px] bg-[#cbcbcb] text-white ${className}`}>
      <Pencil className="size-[23px]" />
    </span>
  );
}

function LayerRow({ dot, check, children }: { dot: string; check: string; children: ReactNode }) {
  return (
    <div className="flex h-[42px] items-start pl-10">
      <div className="flex w-11">
        <Check className={check} />
      </div>
      <span className={`size-[42px] rounded-full ${dot}`} />
      <span className="mt-1.5 ml-3 leading-[30px]">{children}</span>
    </div>
  );
}

function MapTab({ children, className = '' }: { children: ReactNode; className?: string }) {
  return (
    <div className={`flex h-[60px] items-center justify-end rounded-l-xl border-2 border-r-0 border-[#e0e0e0] bg-white text-[#333] ${className}`}>
      {children}
    </div>
  );
}

export default function App() {
  return (
    <div className="flex h-[1378px] w-[2048px] flex-col overflow-hidden bg-white font-['Lato',sans-serif] text-2xl leading-[30px] text-black [font-variant-ligatures:none]">
      <header className="flex h-[78px] shrink-0 items-start justify-between border-b-2 border-[#e0e0e0] bg-[#5e5e5e] pr-[22px] pl-[34px] text-white">
        <span className="mt-[18px] font-['Bradley_Hand','Segoe_Print','Lato',cursive] text-[32px] leading-10 font-normal tracking-[3px] italic [word-spacing:3px]">Local Ground</span>
        <button className="mt-4 flex h-[46px] w-44 items-center rounded-md border border-white pl-[21px] text-[28px] leading-[34px]">
          <span className="-mt-1.5">username</span>
          <svg viewBox="0 0 10 7" className="ml-3 h-[7px] w-2.5 fill-white">
            <path d="M0 0H10L5 7Z" />
          </svg>
        </button>
      </header>

      <div className="flex h-[82px] shrink-0 items-start border-b-2 border-[#e0e0e0] pl-[26px] text-[28.5px] leading-[34px] text-white">
        <h1 className="mt-[17px] w-[1344px] text-[36.6px] leading-[46px] font-bold text-[#6b6b6b]">Berkeley Stuff</h1>
        <button className="mt-4 flex h-[46px] w-[216px] items-center justify-center rounded-[5px] bg-[#979797] pb-1 text-[28px] [word-spacing:-0.5px]">+ Add Site</button>
        <button className="mt-4 ml-[164px] flex h-[46px] w-[140px] items-center rounded-[5px] bg-[#979797] pl-3.5">
          <Pencil className="mt-1 size-[25px]" />
          <span className="ml-5">Edit</span>
        </button>
        <button className="mt-4 ml-3 flex h-[46px] w-[126px] items-center rounded-[5px] bg-[#6b6b6b] pl-[11px]">
          <ShareArrow />
          <span className="-mt-1 ml-[7px]">Share</span>
        </button>
      </div>

      <main className="flex h-[1218px]">
        <section className="w-[637px] shrink-0 overflow-hidden">
          <h2 className="mt-[34px] ml-10 text-[48.7px] leading-[58px] text-[#333] [word-spacing:-2.500px]">Site 8: Hannah and Tom</h2>
          <div className="mt-9 flex h-[388px] items-center pl-10">
            <Triangle flip />
            <div className="mr-3 ml-2.5 h-[388px] w-[474px] bg-[#d8d8d8]" />
            <Triangle />
          </div>
          <p className="mt-[22px] ml-[82px] text-[24.3px] font-bold">Picture Caption</p>
          <div className="mt-[73px] flex h-[70px] items-center pl-10">
            <Triangle flip className="mt-1.5 text-[#d8d8d8]" />
            <span className="ml-[23px] flex size-[70px] shrink-0 items-center justify-center rounded-full border-[6px] border-[#979797]">
              <Triangle className="ml-1.5 text-[#979797]" />
            </span>
            <div className="relative mt-0.5 ml-[17px] h-2.5 w-[354px] rounded-full bg-[#d8d8d8]">
              <span className="absolute -top-3.5 left-[76px] size-[38px] rounded-full border-8 border-[#d8d8d8] bg-white" />
            </div>
            <Triangle className="mt-1.5 ml-8 text-[#d8d8d8]" />
          </div>
          <p className="mt-[25px] ml-[86px] text-[24.2px] font-bold">Audio Caption</p>
          <div className="mt-[78px] ml-[50px] whitespace-nowrap">
            <p className="[word-spacing:-0.5px]">Lorem ipsum dolor sit amet, consectetur adipiscing</p>
            <p className="[word-spacing:-0.8px]">elit, sed do eiusmod tempor incididunt ut labore et</p>
            <p className="[word-spacing:-1px]">dolore magna aliqua. Ut enim ad minim veniam, quis</p>
            <p className="[word-spacing:-0.2px]">nostrud exercitation ullamco laboris nisi ut aliquip ex</p>
            <p className="[word-spacing:-2px]">ea commodo consequat.</p>
          </div>
          <div className="mt-[70px] flex gap-3 pl-14 text-white">
            <span className="h-9 w-[168px] rounded-full bg-[#6b6b6b] pt-[2px] pl-[18px]">Lorem ipsum</span>
            <span className="h-9 w-[116px] rounded-full bg-[#6b6b6b] pt-[2px] pl-3.5">dolor sit</span>
            <span className="h-9 w-[214px] rounded-full bg-[#6b6b6b] pt-[2px] pl-3.5 [word-spacing:-1px]">amet consectetur</span>
          </div>
          <div className="mt-[84px] flex pl-[50px]">
            <span className="w-[272px] font-bold">Site:</span>
            <span>8</span>
          </div>
        </section>

        <section className="relative w-[731px] shrink-0 overflow-hidden">
          <BayMap />
          <div className="absolute inset-0 border-r-2 border-l border-[#e0e0e0]" />
          <div className="absolute top-[22px] right-0 flex w-[118px] flex-col gap-4">
            <MapTab className="mr-0.5 pt-0.5 pr-[29px]">Data</MapTab>
            <MapTab className="mr-0.5 pr-[29px] pb-0.5">Style</MapTab>
            <MapTab className="pr-[30px] pb-0.5">Maps</MapTab>
          </div>
          <div className="absolute bottom-0 left-[268px] h-[21px] w-[146px] border-2 border-b-0 border-[#d4d4d4] bg-white pl-0.5 text-[22px] leading-[19px] font-semibold text-[#c8c8c8] shadow">
            Search
          </div>
        </section>

        <section className="grow pl-[42px] font-bold text-[#6b6b6b]">
          <h3 className="mt-[30px]">MAPS</h3>
          <div className="mt-[15px] flex h-[58px] w-[588px] items-center justify-between rounded-[4px] border-2 border-[#e6e6e6] bg-[#f3f3f3] pr-4 pl-3.5 text-[24.3px] font-normal">
            <span className="mt-0.5">Tom’s Garden Research</span>
            <svg viewBox="0 0 14 14" className="mt-0.5 size-3.5 fill-[#6b6b6b]">
              <path d="M0 0H14L7 14Z" />
            </svg>
          </div>
          <div className="mt-[37px] flex w-[588px] items-start">
            <GroupHead>Worm Count</GroupHead>
            <EditBox className="mt-0.5" />
          </div>
          <div className="mt-3 flex flex-col gap-4">
            <LayerRow dot="bg-[#979797]" check="mt-2">Less than 1</LayerRow>
            <LayerRow dot="bg-[#434343]" check="mt-2">Greater than 1</LayerRow>
          </div>
          <div className="mt-10 flex w-[588px] items-start">
            <GroupHead>Pitfall Count</GroupHead>
            <EditBox />
          </div>
          <div className="mt-3.5 flex flex-col gap-4">
            <LayerRow dot="bg-[#e1e1e1]" check="mt-1.5">Less than 10</LayerRow>
            <LayerRow dot="bg-[#c3c3c3]" check="mt-1.5 ml-0.5">10 or more</LayerRow>
          </div>
          <a className="mt-[34px] ml-[46px] block text-[#333] underline decoration-2 underline-offset-2">+ Add Layer</a>
        </section>
      </main>
    </div>
  );
}
